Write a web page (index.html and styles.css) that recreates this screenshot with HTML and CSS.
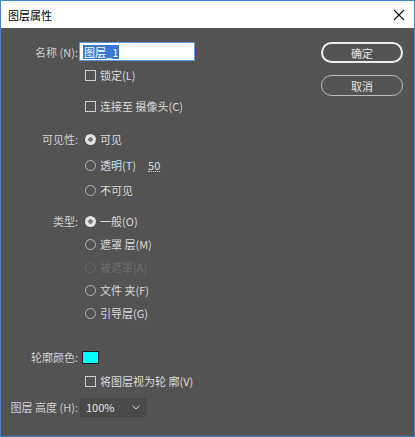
FILE: index.html
```html
<!DOCTYPE html>
<html lang="zh-CN">
<head>
<meta charset="utf-8">
<title>图层属性</title>
<link rel="stylesheet" href="styles.css">
</head>
<body>
<div class="window">
  <div class="titlebar">
    <span class="title">图层属性</span>
    <svg class="close" width="12" height="12" viewBox="0 0 12 12"><path d="M1 1L11 11M11 1L1 11" stroke="#111" stroke-width="1.1" fill="none"/></svg>
  </div>
  <div class="content">
    <div class="form">
      <div class="row r-name">
        <span class="label">名称 (N):</span>
        <div class="input"><span class="sel">图层_1</span></div>
      </div>
      <div class="row r-lock sub">
        <span class="cb"></span><span class="txt">锁定(L)</span>
      </div>
      <div class="row r-cam sub">
        <span class="cb"></span><span class="txt">连接至 摄像头(C)</span>
      </div>
      <div class="row r-vis">
        <span class="label">可见性:</span>
        <span class="rb on"></span><span class="txt">可见</span>
      </div>
      <div class="row r-tr sub">
        <span class="rb"></span><span class="txt">透明(T)</span><span class="num">50</span>
      </div>
      <div class="row r-inv sub">
        <span class="rb"></span><span class="txt">不可见</span>
      </div>
      <div class="row r-type">
        <span class="label">类型:</span>
        <span class="rb on"></span><span class="txt">一般(O)</span>
      </div>
      <div class="row r-t sub">
        <span class="rb"></span><span class="txt">遮罩 层(M)</span>
      </div>
      <div class="row r-t sub disabled">
        <span class="rb"></span><span class="txt">被遮罩(A)</span>
      </div>
      <div class="row r-t sub">
        <span class="rb"></span><span class="txt">文件 夹(F)</span>
      </div>
      <div class="row r-t sub">
        <span class="rb"></span><span class="txt">引导层(G)</span>
      </div>
      <div class="row r-color">
        <span class="label">轮廓颜色:</span>
        <span class="swatch"></span>
      </div>
      <div class="row r-view sub">
        <span class="cb"></span><span class="txt">将图层视为轮 廓(V)</span>
      </div>
      <div class="row r-h">
        <span class="label">图层 高度 (H):</span>
        <div class="select"><span>100%</span>
          <svg width="8" height="5" viewBox="0 0 8 5"><path d="M0.5 0.5L4 4L7.5 0.5" stroke="#cfcfcf" stroke-width="1" fill="none"/></svg>
        </div>
      </div>
    </div>
    <div class="buttons">
      <div class="btn primary">确定</div>
      <div class="btn">取消</div>
    </div>
  </div>
</div>
</body>
</html>
```
FILE: styles.css
```css
html, body {
  margin: 0;
  padding: 0;
  background: #535353;
}
body {
  font-family: "Noto Sans CJK SC", "Liberation Sans", sans-serif;
  font-size: 11px;
  color: #d8d8d8;
}
.window {
  width: 415px;
  height: 437px;
  box-sizing: border-box;
  border: 1px solid #3d86d4;
  display: flex;
  flex-direction: column;
  background: #535353;
}
.titlebar {
  height: 27px;
  flex: none;
  background: #ffffff;
  display: flex;
  align-items: center;
  justify-content: space-between;
  padding: 0 9px 0 7px;
}
.title {
  color: #000;
  font-size: 11px;
  line-height: 14px;
}
.content {
  flex: 1;
  display: flex;
}
.form {
  flex: 1;
  display: flex;
  flex-direction: column;
  padding-top: 14px;
}
.row {
  display: flex;
  align-items: center;
  height: 20px;
  line-height: 14px;
}
.label {
  width: 77px;
  text-align: right;
  flex: none;
  margin-right: 7px;
  color: #d0d0d0;
}
.sub { padding-left: 84px; }
.r-name { height: 19px; }
.r-name .label { margin-right: 1px; }
.r-lock { margin-top: 4px; }
.r-cam { margin-top: 11px; }
.r-vis { margin-top: 13px; }
.r-tr { margin-top: 6px; }
.r-inv { margin-top: 5px; }
.r-type { margin-top: 11px; }
.r-t { margin-top: 3px; }
.r-color { margin-top: 24px; }
.r-color .label { margin-right: 4px; }
.r-view { margin-top: 4px; }
.r-h { margin-top: 6px; }
.r-h .label { margin-right: 2px; }

.input {
  width: 111px;
  height: 17px;
  background: #fff;
  border: 1px solid #5a9be0;
  display: flex;
  align-items: center;
  padding-left: 3px;
}
.sel {
  background: #3878d8;
  color: #fff;
  line-height: 14px;
  padding: 0 1px;
}
.cb {
  width: 9px;
  height: 9px;
  border: 1px solid #cfcfcf;
  flex: none;
  margin-right: 4px;
}
.rb {
  width: 9px;
  height: 9px;
  border: 1px solid #b8b8b8;
  border-radius: 50%;
  flex: none;
  margin-right: 4px;
}
.rb.on {
  width: 11px;
  height: 11px;
  border: none;
  background: radial-gradient(circle, #7a7a7a 0 2px, #e2e2e2 2.5px);
}
.txt { color: #dadada; }
.num {
  margin-left: 12px;
  border-bottom: 1px dotted #cfcfcf;
  line-height: 12px;
  color: #dadada;
}
.disabled .txt { color: #6e6e6e; }
.disabled .rb { border-color: #686868; }
.swatch {
  width: 15px;
  height: 11px;
  background: #00ffff;
  border: 1px solid #1e1e1e;
}
.select {
  width: 54px;
  height: 17px;
  background: #4a4a4a;
  border: 1px solid #464646;
  display: flex;
  align-items: center;
  justify-content: space-between;
  padding: 0 5px 0 5px;
  box-sizing: content-box;
  color: #e6e6e6;
}
.select span { line-height: 14px; }
.buttons {
  flex: none;
  display: flex;
  flex-direction: column;
  gap: 12px;
  padding: 14px 11px 0 0;
}
.btn {
  width: 80px;
  height: 19px;
  border: 1px solid #bdbdbd;
  border-radius: 11px;
  display: flex;
  align-items: center;
  justify-content: center;
  color: #e4e4e4;
  line-height: 14px;
}
.btn.primary {
  border: 2px solid #ececec;
  width: 78px;
  height: 17px;
}
```
